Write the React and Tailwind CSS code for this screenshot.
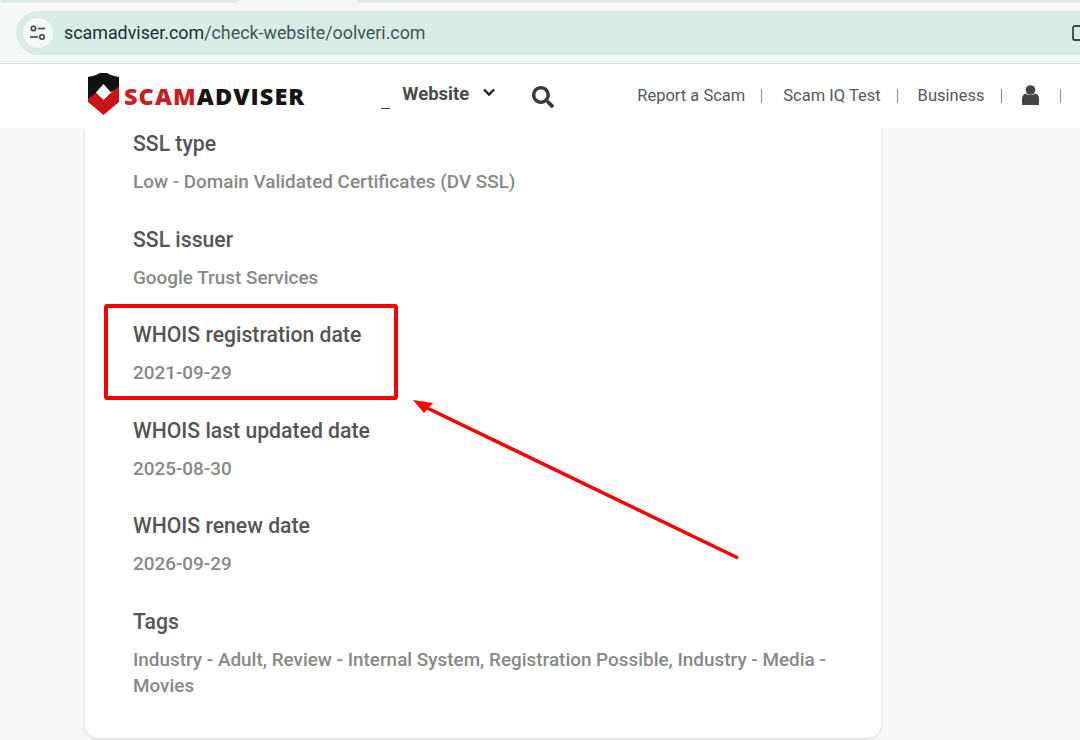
import React from 'react';
import { FaSearch } from 'react-icons/fa';

const details = [
  { title: 'SSL type', value: 'Low - Domain Validated Certificates (DV SSL)' },
  { title: 'SSL issuer', value: 'Google Trust Services' },
  { title: 'WHOIS registration date', value: '2021-09-29' },
  { title: 'WHOIS last updated date', value: '2025-08-30' },
  { title: 'WHOIS renew date', value: '2026-09-29' },
  {
    title: 'Tags',
    value: 'Industry - Adult, Review - Internal System, Registration Possible, Industry - Media - Movies',
  },
];

const BrowserBar = () => (
  <div className="h-16 shrink-0 bg-[#f4f9f7] border-b border-[#d5e5e0] flex flex-col">
    <div className="h-[3px] flex">
      <div className="w-[238px] bg-[#dcede8] rounded-b-lg" />
      <div className="w-[119px]" />
      <div className="flex-1 bg-[#dcede8] rounded-bl-lg" />
    </div>
    <div className="h-[44px] mt-2 ml-4 bg-[#daece6] rounded-l-full flex items-center pl-[7px] relative">
      <div className="w-[30px] h-[30px] rounded-full bg-[#f4f9f7] flex items-center justify-center">
        <svg width="18" height="16" viewBox="0 0 18 16" fill="none" stroke="#37474a" strokeWidth="1.6">
          <circle cx="4.5" cy="3.5" r="2.2" />
          <path d="M9 3.5h7" />
          <path d="M1 12h8" />
          <circle cx="13" cy="12" r="2.2" />
        </svg>
      </div>
      <span className="ml-[11px] text-[17.85px] text-[#42565a] font-['Roboto',sans-serif]">
        <span className="text-[#1d3036]">scamadviser.com</span>/check-website/oolveri.com
      </span>
      <svg className="absolute left-[1056px] top-[14px]" width="10" height="20" viewBox="0 0 10 20" fill="none" stroke="#37474a" strokeWidth="1.8">
        <path d="M10 1H3a2 2 0 0 0-2 2v10a2 2 0 0 0 2 2h7" />
      </svg>
    </div>
  </div>
);

const Logo = () => (
  <div className="flex items-center">
    <svg className="-translate-y-[3px]" width="33" height="43" viewBox="0 0 33 43">
      <path d="M1 5C6 4 11 2.500 13 1H20C22 2.500 27 4 32 5V17L1 28Z" fill="#111111" />
      <path d="M1 27L10 20L16.500 27L32 14V30L16.500 43L1 30Z" fill="#c81414" />
      <path d="M16.500 12L24 20.500L16.500 28L9 20.500Z" fill="#ffffff" />
    </svg>
    <span className="ml-[4px] text-[23.500px] leading-none font-extrabold font-['Open_Sans',sans-serif] tracking-[1.05px] mt-[2px]">
      <span className="text-[#c81e24]">SCAM</span>
      <span className="text-[#141414]">ADVISER</span>
    </span>
  </div>
);

const Nav = () => (
  <header className="h-16 shrink-0 bg-white flex items-center pl-[87px] font-['Roboto',sans-serif] relative z-10">
    <Logo />
    <span className="ml-[76px] mt-[25px] w-[9px] h-px bg-[#444444]" />
    <span className="ml-[12px] -mt-[3px] text-[18.500px] font-bold text-[#4a4a4a]">Website</span>
    <svg className="ml-[14px] -mt-[8px]" width="12" height="9" viewBox="0 0 12 9" fill="none" stroke="#222222" strokeWidth="2.400">
      <path d="M1 1.500L6 6.500L11 1.500" />
    </svg>
    <FaSearch className="ml-[37px] mt-[1px] text-[#3a3a3a] text-[22px]" />
    <nav className="ml-[83px] flex items-center text-[16.500px] text-[#585858]">
      <span>Report a Scam</span>
      <span className="ml-[16px] w-px h-[14px] bg-[#a08a8a]" />
      <span className="ml-[21px]">Scam IQ Test</span>
      <span className="ml-[16px] w-px h-[14px] bg-[#a08a8a]" />
      <span className="ml-[20px]">Business</span>
      <span className="ml-[17px] w-px h-[14px] bg-[#8a8a8a]" />
      <svg className="ml-[20px] -mt-[2px]" width="17" height="20" viewBox="0 0 17 20" fill="#444444">
        <circle cx="8.500" cy="5" r="4.800" />
        <path d="M0 20V13.500C0 10.500 2 9 4 8.500C6 10.500 11 10.500 13 8.500C15 9 17 10.500 17 13.500V20Z" />
      </svg>
      <span className="ml-[21px] w-px h-[14px] bg-[#a08a8a]" />
    </nav>
  </header>
);

const Annotations = () => (
  <>
    <div className="absolute left-[104px] top-[304px] w-[294px] h-[96px] border-4 border-[#fa0000] rounded-[3px]" />
    <svg className="absolute left-[405px] top-[390px]" width="345" height="180" viewBox="0 0 345 180" fill="none">
      <path d="M333 168L20 17" stroke="#fa0000" strokeWidth="3.500" />
      <path d="M8 10L28 13L19 23Z" fill="#fa0000" />
    </svg>
  </>
);

export default function App() {
  return (
    <div className="relative w-[1080px] h-[740px] overflow-hidden bg-[#f8f8f8] flex flex-col">
      <BrowserBar />
      <Nav />
      <main className="flex-1 pl-[85px] overflow-hidden">
        <section className="w-[796px] h-[610px] bg-white rounded-b-[14px] shadow-[0_1px_4px_rgba(0,0,0,0.12)] px-12 pt-[2px] font-['Roboto',sans-serif]">
          {details.map((item) => (
            <div key={item.title} className="h-[95.600px]">
              <h3 className="text-[21.2px] leading-[28px] font-medium text-[#555555]">{item.title}</h3>
              <p className="mt-[11px] text-[18.9px] leading-[26px] text-[#888888] font-medium">{item.value}</p>
            </div>
          ))}
        </section>
      </main>
      <Annotations />
    </div>
  );
}
